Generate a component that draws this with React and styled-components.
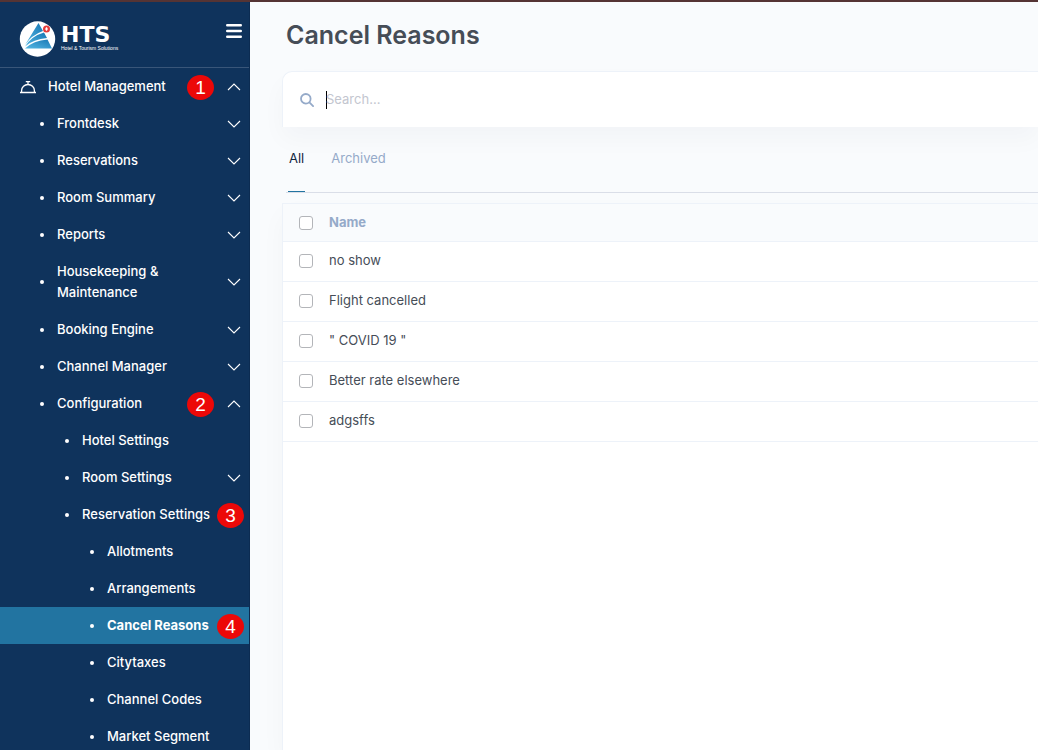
import React from "react";
import styled, { createGlobalStyle } from "styled-components";

const GlobalStyle = createGlobalStyle`
  *, *::before, *::after { box-sizing: border-box; }
  body {
    margin: 0;
    background: #f9fbfd;
    color: #464d57;
    font-family: Inter, "Liberation Sans", sans-serif;
    font-size: 13px;
    line-height: 21px;
  }
  button, input { font: inherit; color: inherit; }
`;

const Page = styled.div`
  display: flex;
  height: 100vh;
  overflow: hidden;
  border-top: 2px solid #553434;
`;

const Sidebar = styled.aside`
  flex: 0 0 250px;
  background: #0f335c;
  border-right: 1px solid #0c2c52;
  color: #fff;
  overflow: hidden;
`;

const Brand = styled.div`
  display: flex;
  align-items: center;
  justify-content: space-between;
  height: 66px;
  padding: 8px 7px 0 19px;
  border-bottom: 1px solid #395679;
`;

const BrandLink = styled.a`
  display: flex;
  align-items: center;
  gap: 5px;
  color: inherit;
  text-decoration: none;
`;

const BrandText = styled.span`
  display: flex;
  flex-direction: column;
`;

const BrandName = styled.span`
  font: bold 22px/20px "DejaVu Sans", sans-serif;
`;

const Tagline = styled.span`
  font: 5px/7px "Liberation Sans", sans-serif;
  white-space: nowrap;
`;

const MenuButton = styled.button`
  display: flex;
  margin-bottom: 16px;
  padding: 0;
  border: 0;
  background: none;
`;

const NavList = styled.ul`
  margin: 0;
  padding: 0;
  list-style: none;
`;

const NavItem = styled.li`
  position: relative;
`;

const NavRow = styled.a`
  display: flex;
  align-items: center;
  width: 100%;
  padding: 8px 8px 8px ${(p) => [20, 40, 65, 90][p.$level]}px;
  border: 0;
  background: ${(p) => (p.$active ? "#2274a1" : "none")};
  color: #fff;
  font-weight: ${(p) => (p.$active ? 700 : 500)};
  text-align: left;
  text-decoration: none;
  cursor: pointer;
`;

const Bullet = styled.span`
  flex: none;
  width: 4px;
  height: 4px;
  margin-right: 13px;
  border-radius: 50%;
  background: #fff;
`;

const NavLabel = styled.span`
  flex: 1;
  max-width: 136px;
`;

const ChevronIcon = styled.svg`
  flex: none;
  margin-left: auto;
  transform: ${(p) => (p.$open ? "rotate(180deg)" : "none")};
`;

const Badge = styled.span`
  position: absolute;
  top: 7px;
  right: ${(p) => (p.$inner ? 35 : 5)}px;
  width: 27px;
  height: 25px;
  border-radius: 50%;
  background: #ec0808;
  color: #fff;
  font: 19px/25px "Liberation Sans", sans-serif;
  text-align: center;
  pointer-events: none;
`;

const Main = styled.main`
  display: flex;
  flex: 1;
  flex-direction: column;
  min-width: 0;
  padding-left: 32px;
`;

const Title = styled.h1`
  margin: 0;
  padding: 17px 0 20px 4px;
  color: #464d57;
  font-size: 25px;
  font-weight: 600;
  line-height: 32px;
`;

const SearchBar = styled.label`
  display: flex;
  flex: none;
  align-items: center;
  gap: 12px;
  height: 56px;
  padding-left: 17px;
  border: 1px solid #edf2f9;
  border-width: 1px 0 0 1px;
  border-top-left-radius: 10px;
  background: #fff;
  box-shadow: 0 12px 24px rgba(18, 38, 63, 0.03);
`;

const SearchInput = styled.input`
  flex: 1;
  min-width: 0;
  padding: 0;
  border: 0;
  outline: 0;
  background: none;
  caret-color: #000;
  &::placeholder { color: #c3c6cf; opacity: 1; }
`;

const Caret = styled.span`
  width: 1px;
  height: 18px;
  margin-right: -13px;
  background: #000;
`;

const Tabs = styled.div`
  display: flex;
  flex: none;
  gap: 25px;
  margin: 0 0 10px 4px;
  padding: 0 2px;
  border-bottom: 1px solid #dadee8;
`;

const Tab = styled.button`
  height: 65px;
  padding: 0 1px 2px;
  border: 0;
  border-bottom: 1px solid ${(p) => (p.$active ? "#2274a1" : "transparent")};
  background: none;
  color: ${(p) => (p.$active ? "#12263f" : "#95aac9")};
`;

const TableCard = styled.section`
  flex: 1;
  border: 1px solid #edf2f9;
  border-width: 1px 0 0 1px;
  background: #fff;
  box-shadow: 0 12px 24px rgba(18, 38, 63, 0.03);
`;

const Table = styled.table`
  width: 100%;
  border-collapse: collapse;
  text-align: left;
`;

const Row = styled.tr`
  height: ${(p) => (p.$head ? 37 : 40)}px;
  border-bottom: 1px solid #edf2f9;
  background: ${(p) => (p.$head ? "#f9fbfd" : "#fff")};
`;

const Cell = styled.td`
  padding: 0 0 2px;
`;

const HeadCell = styled.th`
  padding: 0;
  color: #95aac9;
  font-weight: 700;
`;

const CheckHead = styled(HeadCell)`
  width: 46px;
  padding-left: 16px;
`;

const CheckCell = styled(Cell)`
  width: 46px;
  padding-left: 16px;
`;

const Checkbox = styled.input`
  display: block;
  width: 14px;
  height: 14px;
  margin: 1px 0 0;
  appearance: none;
  border: 1px solid #b3b5b9;
  border-radius: 3px;
  background: #fff;
`;

const items = [
  { label: "Hotel Management", level: 0, open: true, badge: 1 },
  { label: "Frontdesk", level: 1, open: false },
  { label: "Reservations", level: 1, open: false },
  { label: "Room Summary", level: 1, open: false },
  { label: "Reports", level: 1, open: false },
  { label: "Housekeeping & Maintenance", level: 1, open: false },
  { label: "Booking Engine", level: 1, open: false },
  { label: "Channel Manager", level: 1, open: false },
  { label: "Configuration", level: 1, open: true, badge: 2 },
  { label: "Hotel Settings", level: 2 },
  { label: "Room Settings", level: 2, open: false },
  { label: "Reservation Settings", level: 2, badge: 3 },
  { label: "Allotments", level: 3 },
  { label: "Arrangements", level: 3 },
  { label: "Cancel Reasons", level: 3, active: true, badge: 4 },
  { label: "Citytaxes", level: 3 },
  { label: "Channel Codes", level: 3 },
  { label: "Market Segment", level: 3 },
];

const reasons = ["no show", "Flight cancelled", '" COVID 19 "', "Better rate elsewhere", "adgsffs"];

const BellIcon = styled.svg`
  flex: none;
  margin-right: 12px;
`;

function Bell() {
  return (
    <BellIcon width="16" height="14" viewBox="0 0 16 14" fill="none" stroke="#fff" strokeWidth="1.3" aria-hidden="true">
      <path d="M0 12.5h16M1.6 12.5V10.500a6.4 6 0 0 1 12.8 0V12.500M8 4.300V1.800M5.800 1.700h4.400" />
    </BellIcon>
  );
}

function Logo() {
  return (
    <svg width="37" height="36" viewBox="0 0 36 36" aria-hidden="true">
      <defs>
        <linearGradient id="sail" x1="0" y1="1" x2="1" y2="0">
          <stop offset="0" stopColor="#56b9e4" />
          <stop offset="1" stopColor="#1878b5" />
        </linearGradient>
      </defs>
      <circle cx="18" cy="18" r="17.700" fill="#fff" />
      <path d="M19 2 23.500 10Q12 14 5.500 24Z" fill="url(#sail)" />
      <path d="M24.500 11.500 27.500 17Q14 18 5.500 25.500Q12 15 24.500 11.500Z" fill="url(#sail)" />
      <path d="M28 18.500 32.500 27.500H5.500Q14 19.500 28 18.500Z" fill="url(#sail)" />
      <circle cx="27" cy="8" r="3.500" fill="#e63b3b" />
      <path d="M27 6.200v3.600M25.800 8h2.400" stroke="#fff" strokeWidth="1.300" />
    </svg>
  );
}

function Chevron({ open }) {
  return (
    <ChevronIcon $open={open} width="14" height="8" viewBox="0 0 14 8" fill="none" stroke="#fff" strokeWidth="1.1" aria-hidden="true">
      <path d="m1 1 6 6 6-6" />
    </ChevronIcon>
  );
}

function NavEntry({ label, level, open, active, badge }) {
  const expandable = open !== undefined;
  const rowProps = expandable
    ? { as: "button", type: "button", "aria-expanded": open }
    : { href: "#", "aria-current": active ? "page" : undefined };
  return (
    <NavItem>
      <NavRow $level={level} $active={active} {...rowProps}>
        {level === 0 ? <Bell /> : <Bullet />}
        <NavLabel>{label}</NavLabel>
        {expandable && <Chevron open={open} />}
      </NavRow>
      {badge && <Badge $inner={expandable}>{badge}</Badge>}
    </NavItem>
  );
}

export default function App() {
  return (
    <>
      <GlobalStyle />
      <Page>
        <Sidebar>
          <Brand>
            <BrandLink href="#">
              <Logo />
              <BrandText>
                <BrandName>HTS</BrandName>
                <Tagline>Hotel &amp; Tourism Solutions</Tagline>
              </BrandText>
            </BrandLink>
            <MenuButton type="button" aria-label="Toggle menu">
              <svg width="16" height="14" viewBox="0 0 16 14" stroke="#fff" strokeWidth="2.4" strokeLinecap="round">
                <path d="M1.200 1.300h13.600M1.200 7h13.600M1.200 12.700h13.600" />
              </svg>
            </MenuButton>
          </Brand>
          <nav>
            <NavList>
              {items.map((item) => (
                <NavEntry key={item.label} {...item} />
              ))}
            </NavList>
          </nav>
        </Sidebar>
        <Main>
          <Title>Cancel Reasons</Title>
          <SearchBar>
            <svg width="14" height="14" viewBox="0 0 14 14" fill="none" stroke="#95aac9" strokeWidth="1.800" strokeLinecap="round" aria-hidden="true">
              <circle cx="5.800" cy="5.800" r="4.800" />
              <path d="m9.400 9.400 3.700 3.700" />
            </svg>
            <Caret />
            <SearchInput type="search" placeholder="Search…" aria-label="Search" />
          </SearchBar>
          <Tabs role="tablist">
            <Tab type="button" role="tab" aria-selected="true" $active>All</Tab>
            <Tab type="button" role="tab" aria-selected="false">Archived</Tab>
          </Tabs>
          <TableCard>
            <Table>
              <thead>
                <Row $head>
                  <CheckHead><Checkbox type="checkbox" aria-label="Select all" /></CheckHead>
                  <HeadCell>Name</HeadCell>
                </Row>
              </thead>
              <tbody>
                {reasons.map((reason) => (
                  <Row key={reason}>
                    <CheckCell><Checkbox type="checkbox" aria-label={`Select ${reason}`} /></CheckCell>
                    <Cell>{reason}</Cell>
                  </Row>
                ))}
              </tbody>
            </Table>
          </TableCard>
        </Main>
      </Page>
    </>
  );
}
